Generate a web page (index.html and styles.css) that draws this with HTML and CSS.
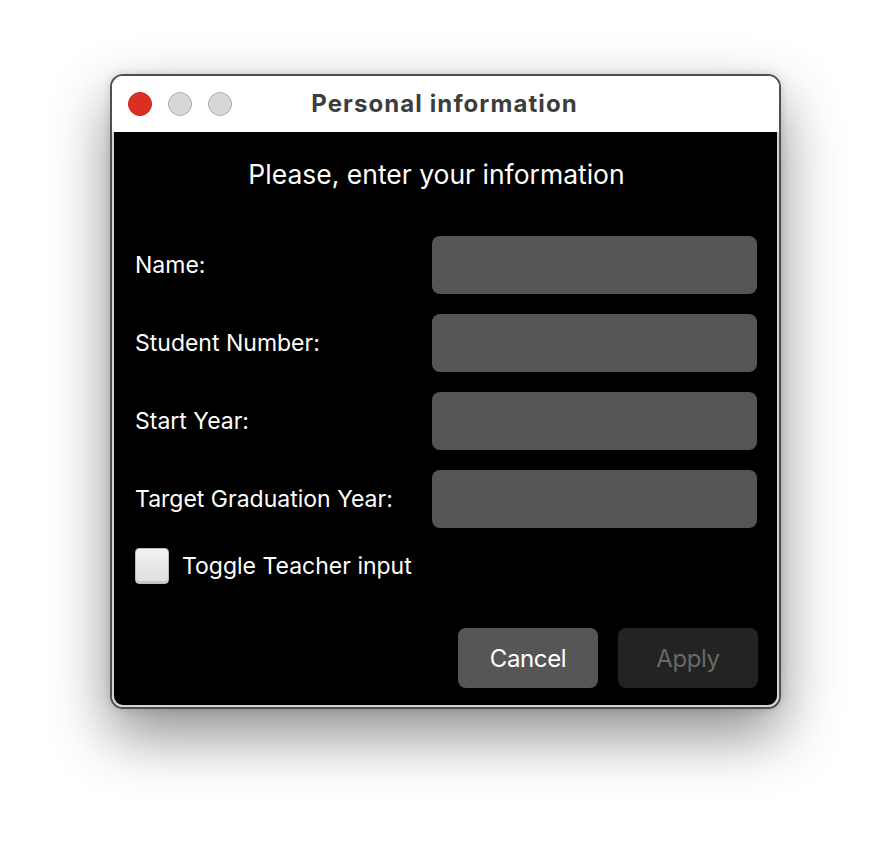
FILE: index.html
```html
<!DOCTYPE html>
<html lang="en">
<head>
<meta charset="utf-8">
<title>Personal information</title>
<link rel="stylesheet" href="styles.css">
</head>
<body>
<div class="page">
  <div class="window">
    <div class="titlebar">
      <div class="lights">
        <span class="light red"></span>
        <span class="light gray"></span>
        <span class="light gray"></span>
      </div>
      <div class="title">Personal information</div>
      <div class="spacer"></div>
    </div>
    <div class="content">
      <div class="heading">Please, enter your information</div>
      <div class="form">
        <label class="label">Name:</label>
        <div class="field"></div>
        <label class="label">Student Number:</label>
        <div class="field"></div>
        <label class="label">Start Year:</label>
        <div class="field"></div>
        <label class="label">Target Graduation Year:</label>
        <div class="field"></div>
      </div>
      <div class="check-row">
        <span class="checkbox"></span>
        <span class="check-label">Toggle Teacher input</span>
      </div>
      <div class="buttons">
        <div class="btn cancel">Cancel</div>
        <div class="btn apply">Apply</div>
      </div>
    </div>
  </div>
</div>
</body>
</html>
```
FILE: styles.css
```css
html, body {
  margin: 0;
  padding: 0;
  background: #ffffff;
}
.page {
  width: 892px;
  height: 856px;
  padding: 74px 0 0 110px;
  box-sizing: border-box;
}
.window {
  width: 671px;
  height: 635px;
  box-sizing: border-box;
  border: 2px solid #4f4f4f;
  border-radius: 13px;
  overflow: hidden;
  background: #ffffff;
  box-shadow: 0 26px 60px rgba(0,0,0,0.45), 0 0 8px rgba(0,0,0,0.15);
  display: flex;
  flex-direction: column;
}
.titlebar {
  height: 56px;
  flex: none;
  background: #ffffff;
  display: grid;
  grid-template-columns: 1fr auto 1fr;
  align-items: center;
  padding: 0 16px;
  box-sizing: border-box;
}
.lights {
  display: flex;
  gap: 16px;
  align-items: center;
}
.light {
  width: 24px;
  height: 24px;
  border-radius: 50%;
  box-sizing: border-box;
}
.light.red {
  background: #dd2e22;
  border: 1px solid #bf271c;
}
.light.gray {
  background: #d7d7d7;
  border: 1px solid #b1b1b1;
}
.title {
  font-family: Inter, "Liberation Sans", sans-serif;
  font-weight: 700;
  font-size: 24px;
  letter-spacing: 1.1px;
  color: #3d3d3d;
  padding-right: 2px;
  padding-bottom: 2px;
}
.content {
  flex: 1;
  background: #000000;
  border: 2px solid #d4d4d4;
  border-top: none;
  border-radius: 0 0 11px 11px;
  padding: 26px 19px 0 21px;
  font-family: Inter, "Noto Sans", sans-serif;
  color: #ffffff;
}
.heading {
  text-align: center;
  font-size: 26.5px;
  line-height: 32px;
  letter-spacing: 0;
  padding-right: 20px;
}
.form {
  margin-top: 46px;
  display: grid;
  grid-template-columns: 297px 325px;
  row-gap: 20px;
  align-items: center;
}
.label {
  font-size: 23px;
  letter-spacing: 0;
  line-height: 28px;
}
.field {
  height: 58px;
  background: #555555;
  border-radius: 8px;
}
.check-row {
  margin-top: 20px;
  display: flex;
  align-items: center;
  gap: 13px;
}
.checkbox {
  width: 34px;
  height: 36px;
  box-sizing: border-box;
  border: 1px solid #bdbdbd;
  border-radius: 4px;
  background: linear-gradient(#f2f2f2, #dedede);
  box-shadow: inset 0 -2px 0 #c9c9c9;
}
.check-label {
  font-size: 23px;
  letter-spacing: 0;
}
.buttons {
  margin-top: 44px;
  display: flex;
  justify-content: flex-end;
  gap: 20px;
}
.btn {
  width: 140px;
  height: 60px;
  border-radius: 8px;
  display: flex;
  align-items: center;
  justify-content: center;
  font-size: 24px;
  letter-spacing: -0.4px;
}
.btn.cancel {
  background: #565656;
  color: #ffffff;
}
.btn.apply {
  background: #232323;
  color: #686868;
}
```
